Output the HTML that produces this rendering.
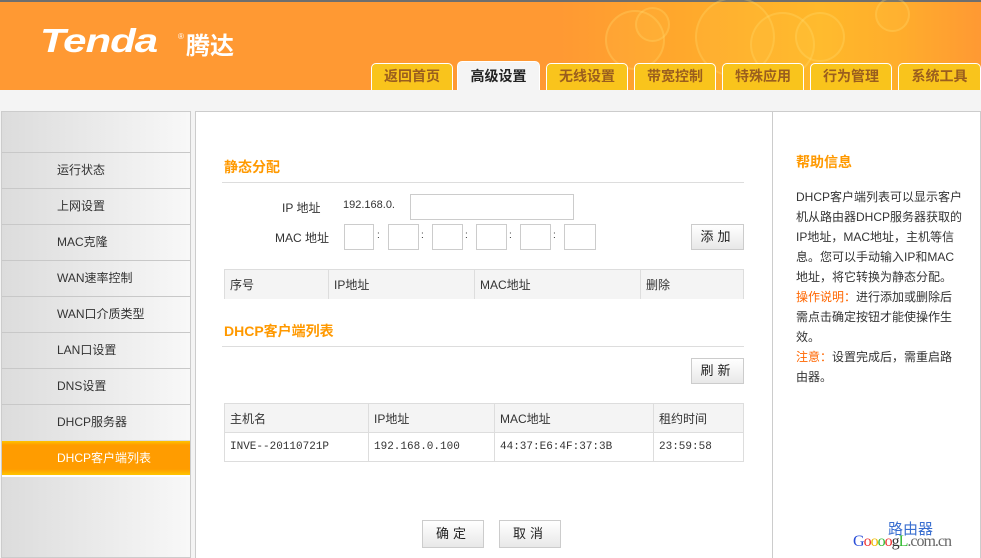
<!DOCTYPE html>
<html><head><meta charset="utf-8"><style>
*{margin:0;padding:0;box-sizing:border-box}
body{width:981px;height:558px;overflow:hidden;background:#f4f4f4;font-family:"Liberation Sans","Noto Sans CJK SC",sans-serif;font-size:12px;color:#333;position:relative}
.a{position:absolute}
#hdr{left:0;top:0;width:981px;height:90px;background:linear-gradient(90deg,#ff9933 0,#ff9933 560px,#ffa82c 680px,#ffb82a 820px,#ffad2c 900px,#ff9933 981px);border-top:2px solid #6e6e6e}
.c{position:absolute;border-radius:50%;border:2px solid rgba(255,225,120,.25);background:rgba(255,220,90,.1)}
.tab{position:absolute;top:63px;height:27px;width:82px;background:#f9c41c;border:1px solid #fff;border-bottom:none;border-radius:5px 5px 0 0;text-align:center;line-height:25px;font-size:14px;font-weight:bold;color:#9a5e1e}
.tab.on{background:#f4f4f4;color:#222;top:61px;height:29px;line-height:29px}
#side{left:1px;top:111px;width:190px;height:447px;border:1px solid #ccc;background:linear-gradient(90deg,#dcdcdc,#f8f8f8)}
.it{position:absolute;left:0;width:188px;height:36px;border-top:1px solid #c8c8c8;line-height:35px;padding-left:55px;color:#333;font-size:12px}
.it.on{background:linear-gradient(#ffc400 0,#ff9c00 4px,#ff9c00 28px,#ffcc00 35px);color:#fff;border-top:1px solid #ddd;border-bottom:2px solid #fff;height:37px}
#main{left:195px;top:111px;width:578px;height:447px;background:#fff;border-left:1px solid #ccc;border-top:1px solid #ccc}
#help{left:772px;top:111px;width:209px;height:447px;background:#fff;border-left:1px solid #ccc;border-top:1px solid #ccc;border-right:1px solid #ccc}
.tt{font-size:14px;font-weight:bold;color:#f90}
.ln{height:1px;background:#ddd}
.inp{position:absolute;height:26px;border:1px solid #ccc;background:#fff}
.btn{position:absolute;height:26px;border:1px solid #ccc;background:linear-gradient(#fff,#e8e8e8);text-align:center;line-height:24px;font-size:13px;letter-spacing:4px;color:#222}
table{position:absolute;border-collapse:collapse;font-size:12px}
td{border:1px solid #ddd;padding-left:5px;height:29px}
tr.h td{background:#f4f4f4}
</style></head><body>
<div id="hdr" class="a">
<div class="c" style="left:605px;top:8px;width:60px;height:60px"></div>
<div class="c" style="left:635px;top:5px;width:35px;height:35px"></div>
<div class="c" style="left:695px;top:-5px;width:80px;height:80px"></div>
<div class="c" style="left:750px;top:10px;width:65px;height:65px"></div>
<div class="c" style="left:795px;top:10px;width:50px;height:50px"></div>
<div class="c" style="left:875px;top:-5px;width:35px;height:35px"></div>
<div style="position:absolute;left:40px;top:22px;font-size:42px;line-height:42px;font-style:italic;font-weight:bold;color:#fff;letter-spacing:-1px;font-family:'Liberation Sans',sans-serif;transform:scaleY(.8);transform-origin:left top">Tenda</div>
<div style="position:absolute;left:178px;top:30px;font-size:8px;color:#fff">®</div>
<div style="position:absolute;left:186px;top:31px;font-size:24px;font-weight:bold;color:#fff;line-height:28px">腾达</div>
</div>
<div class="tab" style="left:371px">返回首页</div>
<div class="tab on" style="left:457px;width:83px">高级设置</div>
<div class="tab" style="left:546px">无线设置</div>
<div class="tab" style="left:634px">带宽控制</div>
<div class="tab" style="left:722px">特殊应用</div>
<div class="tab" style="left:810px">行为管理</div>
<div class="tab" style="left:898px;width:83px">系统工具</div>

<div id="side" class="a">
<div class="it" style="top:40px">运行状态</div>
<div class="it" style="top:76px">上网设置</div>
<div class="it" style="top:112px">MAC克隆</div>
<div class="it" style="top:148px">WAN速率控制</div>
<div class="it" style="top:184px">WAN口介质类型</div>
<div class="it" style="top:220px">LAN口设置</div>
<div class="it" style="top:256px">DNS设置</div>
<div class="it" style="top:292px">DHCP服务器</div>
<div class="it on" style="top:328px">DHCP客户端列表</div>
</div>

<div id="main" class="a"></div>
<div class="a tt" style="left:224px;top:157px">静态分配</div>
<div class="a ln" style="left:222px;top:182px;width:522px"></div>
<div class="a" style="left:282px;top:199px">IP 地址</div>
<div class="a" style="left:343px;top:199px;font-size:11px">192.168.0.</div>
<div class="inp" style="left:410px;top:194px;width:164px"></div>
<div class="a" style="left:275px;top:229px">MAC 地址</div>
<div class="inp" style="left:344px;top:224px;width:30px"></div><div class="a" style="left:377px;top:230px;font-size:10px">:</div>
<div class="inp" style="left:388px;top:224px;width:31px"></div><div class="a" style="left:421px;top:230px;font-size:10px">:</div>
<div class="inp" style="left:432px;top:224px;width:31px"></div><div class="a" style="left:465px;top:230px;font-size:10px">:</div>
<div class="inp" style="left:476px;top:224px;width:31px"></div><div class="a" style="left:509px;top:230px;font-size:10px">:</div>
<div class="inp" style="left:520px;top:224px;width:31px"></div><div class="a" style="left:553px;top:230px;font-size:10px">:</div>
<div class="inp" style="left:564px;top:224px;width:32px"></div>
<div class="btn" style="left:691px;top:224px;width:53px">添加</div>
<table style="left:224px;top:269px;width:520px"><tr class="h"><td style="width:104px;border-bottom:none">序号</td><td style="width:146px;border-bottom:none">IP地址</td><td style="width:166px;border-bottom:none">MAC地址</td><td style="border-bottom:none">删除</td></tr></table>

<div class="a tt" style="left:224px;top:321px">DHCP客户端列表</div>
<div class="a ln" style="left:222px;top:346px;width:522px"></div>
<div class="btn" style="left:691px;top:358px;width:53px">刷新</div>
<table style="left:224px;top:403px;width:520px"><tr class="h"><td style="width:144px">主机名</td><td style="width:126px">IP地址</td><td style="width:159px">MAC地址</td><td>租约时间</td></tr>
<tr style="font-size:11px;font-family:'Liberation Mono',monospace"><td>INVE--20110721P</td><td>192.168.0.100</td><td>44:37:E6:4F:37:3B</td><td>23:59:58</td></tr></table>

<div class="btn" style="left:422px;top:520px;width:62px;height:28px;line-height:26px">确定</div>
<div class="btn" style="left:499px;top:520px;width:62px;height:28px;line-height:26px">取消</div>

<div id="help" class="a"></div>
<div class="a tt" style="left:796px;top:152px">帮助信息</div>
<div class="a" style="left:796px;top:187px;width:166px;line-height:20px;font-size:12px;color:#333">DHCP客户端列表可以显示客户机从路由器DHCP服务器获取的IP地址，MAC地址，主机等信息。您可以手动输入IP和MAC地址，将它转换为静态分配。<br><span style="color:#f60">操作说明：</span>进行添加或删除后需点击确定按钮才能使操作生效。<br><span style="color:#f60">注意：</span>设置完成后，需重启路由器。</div>
<div class="a" style="left:888px;top:518px;font-size:15px;color:#3a6fd0">路由器</div>
<div class="a" style="left:853px;top:533px;font-size:16px;font-family:'Liberation Serif',serif;letter-spacing:-1px"><span style="color:#2a4ed8">G</span><span style="color:#e33">o</span><span style="color:#eb0">o</span><span style="color:#3b3">o</span><span style="color:#e33">o</span><span style="color:#333">g</span><span style="color:#3b3">L</span><span style="color:#666">.com.cn</span></div>
</body></html>
